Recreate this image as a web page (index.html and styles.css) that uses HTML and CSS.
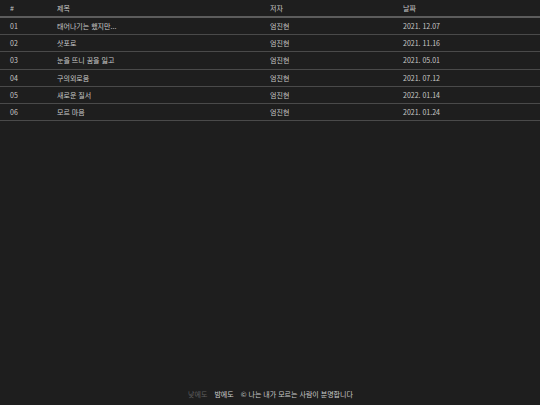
FILE: index.html
```html
<!DOCTYPE html>
<html lang="ko">
<head>
<meta charset="utf-8">
<link rel="stylesheet" href="styles.css">
</head>
<body>
<div class="page">
  <table class="list">
    <thead>
      <tr><th class="c-num">#</th><th class="c-title">제목</th><th class="c-author">저자</th><th class="c-date">날짜</th></tr>
    </thead>
    <tbody>
      <tr><td>01</td><td>태어나기는 했지만...</td><td>엄진현</td><td>2021. 12.07</td></tr>
      <tr><td>02</td><td>삿포로</td><td>엄진현</td><td>2021. 11.16</td></tr>
      <tr><td>03</td><td>눈을 뜨니 꿈을 잃고</td><td>엄진현</td><td>2021. 05.01</td></tr>
      <tr><td>04</td><td>구의외로움</td><td>엄진현</td><td>2021. 07.12</td></tr>
      <tr><td>05</td><td>새로운 질서</td><td>엄진현</td><td>2022. 01.14</td></tr>
      <tr><td>06</td><td>모르 마음</td><td>엄진현</td><td>2021. 01.24</td></tr>
    </tbody>
  </table>
  <footer class="foot">
    <span class="mode off">낮에도</span>
    <span class="mode on">밤에도</span>
    <span class="copy">© 나는 내가 모르는 사람이 분명합니다</span>
  </footer>
</div>
</body>
</html>
```
FILE: styles.css
```css
html, body {
  margin: 0;
  padding: 0;
  background: #1e1e1e;
}
body {
  font-family: "Noto Sans CJK KR", "Liberation Sans", sans-serif;
  color: #c8c8c8;
  font-size: 7px;
}
.page {
  height: 405px;
  display: flex;
  flex-direction: column;
}
.list {
  width: 540px;
  border-collapse: collapse;
  table-layout: fixed;
}
.list th, .list td {
  text-align: left;
  font-weight: normal;
  padding: 0 10px;
  line-height: 10px;
}
.list th {
  height: 16px;
  border-bottom: 2px solid #5c5c5c;
}
.list td {
  height: 16.2px;
  border-bottom: 1px solid #4a4a4a;
}
.c-num { width: 27px; }
.c-title { width: 193px; }
.c-author { width: 113px; }
.c-date { width: auto; }
.foot {
  margin-top: auto;
  height: 22px;
  display: flex;
  justify-content: center;
  align-items: center;
  gap: 7px;
  padding-left: 1px;
}
.off { color: #5e5e5e; }
.on { color: #d0d0d0; }
.copy { color: #c8c8c8; }
```
